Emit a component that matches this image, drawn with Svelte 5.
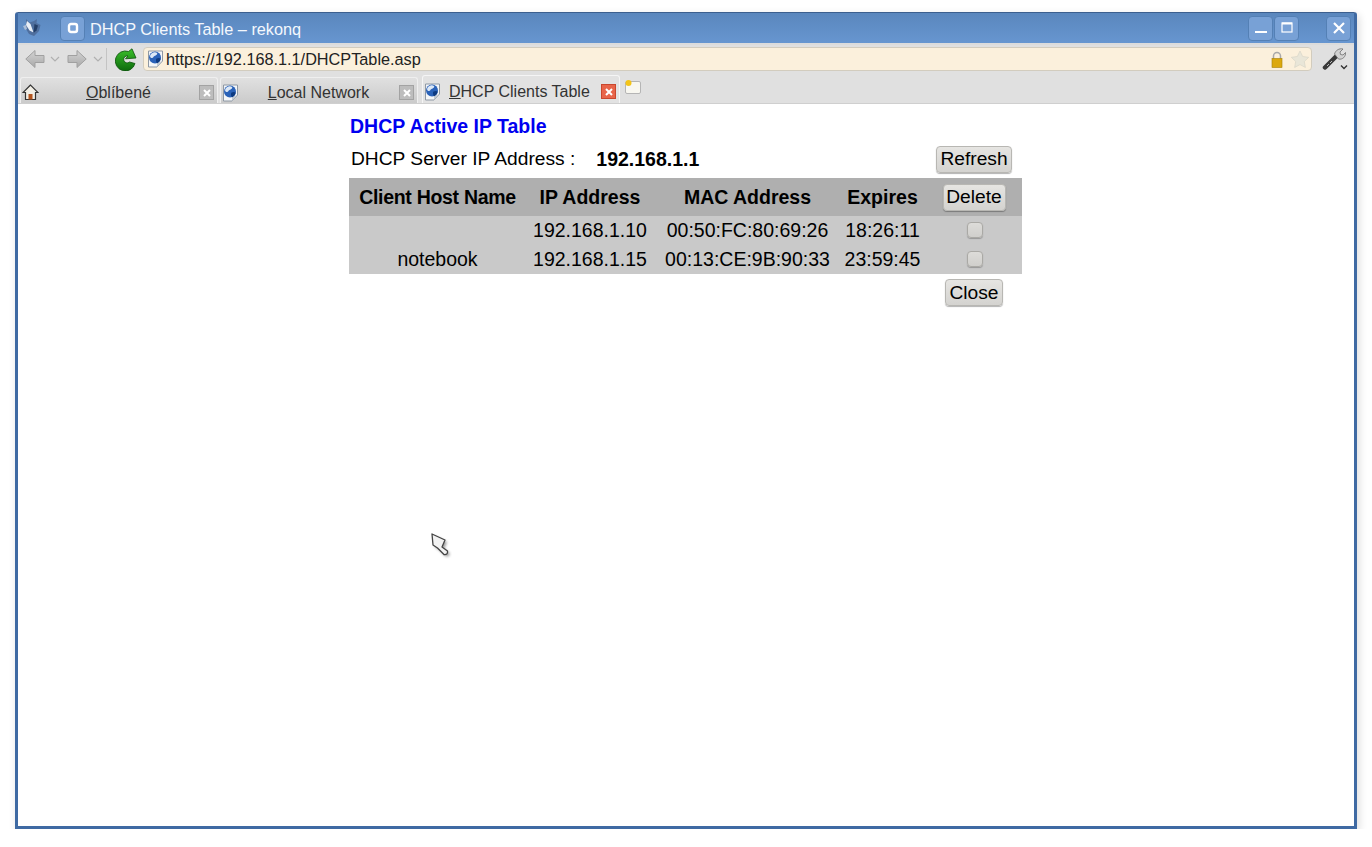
<script>
    const tabs = [
        { key: 'O', rest: 'blíbené', icon: 'home', width: 198 },
        { key: 'L', rest: 'ocal Network', icon: 'globe', width: 198 },
        { key: 'D', rest: 'HCP Clients Table', icon: 'globe', width: 198, active: true }
    ];

    const clients = [
        { host: '', ip: '192.168.1.10', mac: '00:50:FC:80:69:26', expires: '18:26:11' },
        { host: 'notebook', ip: '192.168.1.15', mac: '00:13:CE:9B:90:33', expires: '23:59:45' }
    ];
</script>

{#snippet globe()}
    <svg class="favicon" width="17" height="18" viewBox="0 0 17 18">
        <path d="M1.500 1h14v10l-5.500 6h-8.500z" fill="#f4f6f8" stroke="#8e98a4" />
        <path d="M15.500 11l-5.500 6v-4z" fill="#c3cad2" />
        <circle cx="8" cy="7.500" r="6" fill="#2a62b8" />
        <path d="M4 4c2-2 5-2 6-1s-1 2.500-2.500 3-1 2.500-3 2S3 5 4 4z" fill="#dce8f6" />
        <path d="M9.500 8.500c1.500-.8 3.500-.8 4.200 0-.5 2.500-1.700 4-3.700 4.700-1-1.200-1.500-3.500-.5-4.700z" fill="#0d3a80" />
    </svg>
{/snippet}

<div class="window">
    <header class="titlebar">
        <svg class="appicon" width="22" height="22" viewBox="0 0 22 22">
            <path d="M5 2l3.500 3.500L13 4l3-2-.5 4 4 2-1.500 6-5 5-5-2-3-5z" fill="#4f6f9e" />
            <path d="M6 4l3.500 3 3 8.500-4-2L5 8z" fill="#e8eef6" />
            <path d="M13.500 7l3.500 1.500-1.500 5-3 2.500z" fill="#243f68" />
            <path d="M2 9l3-1 1 4-2 1z" fill="#a9bdd8" />
        </svg>
        <span class="winbtn pin">
            <svg width="14" height="14" viewBox="0 0 14 14"><rect x="3" y="3" width="8" height="8" rx="2" fill="none" stroke="#fff" stroke-width="2.400" /></svg>
        </span>
        <span class="wintitle">DHCP Clients Table – rekonq</span>
        <span class="winbtn">
            <svg width="14" height="14" viewBox="0 0 14 14"><rect x="1" y="10" width="12" height="2" fill="#fff" /></svg>
        </span>
        <span class="winbtn second">
            <svg width="14" height="14" viewBox="0 0 14 14"><rect x="2" y="2" width="10" height="9" fill="none" stroke="#fff" stroke-width="1.200" /><rect x="2" y="1.500" width="10" height="2" fill="#fff" /></svg>
        </span>
        <span class="winbtn close">
            <svg width="14" height="14" viewBox="0 0 14 14"><path d="M2 2l10 10M12 2L2 12" stroke="#fff" stroke-width="2.200" /></svg>
        </span>
    </header>

    <div class="toolbar">
        <svg class="arrow" width="20" height="20" viewBox="0 0 20 20">
            <defs><linearGradient id="grey" x1="0" y1="0" x2="0" y2="1"><stop offset="0" stop-color="#d4d4d4" /><stop offset="1" stop-color="#a8a8a8" /></linearGradient></defs>
            <path d="M.8 10L10 1.500v5h9v7h-9v5z" fill="url(#grey)" stroke="#a0a0a0" />
        </svg>
        <svg class="chev" width="10" height="6" viewBox="0 0 10 6"><path d="M1 1l4 4 4-4" fill="none" stroke="#b0b0b0" stroke-width="1.200" /></svg>
        <svg class="arrow fwd" width="20" height="20" viewBox="0 0 20 20"><path d="M19.200 10L10 1.500v5H1v7h9v5z" fill="url(#grey)" stroke="#a0a0a0" /></svg>
        <svg class="chev gap" width="10" height="6" viewBox="0 0 10 6"><path d="M1 1l4 4 4-4" fill="none" stroke="#b0b0b0" stroke-width="1.200" /></svg>
        <span class="sep"></span>
        <svg class="reload" width="22" height="23" viewBox="0 0 22 23">
            <defs><linearGradient id="green" x1="0" y1="0" x2="0" y2="1"><stop offset="0" stop-color="#3cc02c" /><stop offset="1" stop-color="#0c6a0c" /></linearGradient></defs>
            <path d="M20 15.500A10 10 0 1 1 13.500 3.500L17 .8l4 9.200-10.500.8 2.500-2.800A3.500 3.500 0 1 0 14.500 14z" fill="url(#green)" stroke="#0b520b" stroke-width=".8" />
        </svg>
        <div class="urlbar">
            {@render globe()}
            <span class="url">https://192.168.1.1/DHCPTable.asp</span>
            <svg class="lock" width="14" height="17" viewBox="0 0 14 17">
                <path d="M3.500 8V5a3.500 3.500 0 0 1 7 0v3" fill="none" stroke="#a8a8a8" stroke-width="1.500" />
                <rect x="2" y="7.500" width="10" height="9" fill="#dca80c" stroke="#a67f08" stroke-width=".6" />
            </svg>
            <svg class="star" width="20" height="18" viewBox="0 0 20 18"><path d="M10 1l2.700 5.500 6 .8-4.400 4.200 1.100 6L10 14.600l-5.400 2.900 1.100-6L1.300 7.300l6-.8z" fill="#e9e6d8" stroke="#d4d1c4" stroke-width=".6" /></svg>
        </div>
        <svg class="tools" width="26" height="24" viewBox="0 0 26 24">
            <path d="M3 20.500L14 9.500" stroke="#3a3a3a" stroke-width="4.500" stroke-linecap="round" />
            <path d="M5 19l2-2M8 16l2-2" stroke="#bbb" stroke-width="1" />
            <path d="M12.500 7c1-3.500 4.500-6 8.500-5l-3 3 .5 2.500L21 8l2.500-2.500c.5 4-3 7.500-7 6.500z" fill="#d2d2d2" stroke="#6f6f6f" stroke-width=".8" />
            <path d="M19 18.500l3 3 3-3" fill="none" stroke="#333" stroke-width="1.400" />
        </svg>
    </div>

    <nav class="tabbar">
        {#each tabs as tab}
            <div class="tab" class:active={tab.active} style="width: {tab.width}px">
                {#if tab.icon === 'home'}
                    <svg class="favicon" width="17" height="17" viewBox="0 0 17 17">
                        <path d="M8.500 1L1 8.500h2.500v7h10v-7H16z" fill="#f2efe6" stroke="#333" stroke-width="1.200" />
                        <rect x="6.500" y="10" width="4" height="5.500" fill="#b3541e" />
                    </svg>
                {:else}
                    {@render globe()}
                {/if}
                <span class="tabtitle"><u>{tab.key}</u>{tab.rest}</span>
                <span class="tabclose">
                    <svg width="10" height="10" viewBox="0 0 10 10"><path d="M2 2l6 6M8 2L2 8" stroke="#fff" stroke-width="2" /></svg>
                </span>
            </div>
        {/each}
        <svg class="newtab" width="18" height="18" viewBox="0 0 18 18">
            <rect x="1.500" y="2.500" width="15" height="12" rx="1.500" fill="#f8f7f0" stroke="#b5b5b5" />
            <circle cx="4.500" cy="4" r="3" fill="#f3c417" />
        </svg>
    </nav>

    <main class="page">
        <div class="panel">
            <h1>DHCP Active IP Table</h1>
            <div class="server">
                <span class="label">DHCP Server IP Address :</span>
                <strong>192.168.1.1</strong>
                <button class="refresh">Refresh</button>
            </div>
            <table>
                <thead>
                    <tr>
                        <th class="c1">Client Host Name</th>
                        <th class="c2">IP Address</th>
                        <th class="c3">MAC Address</th>
                        <th class="c4">Expires</th>
                        <th class="c5"><button>Delete</button></th>
                    </tr>
                </thead>
                <tbody>
                    {#each clients as client}
                        <tr>
                            <td>{client.host}</td>
                            <td>{client.ip}</td>
                            <td>{client.mac}</td>
                            <td>{client.expires}</td>
                            <td class="c5"><span class="check"></span></td>
                        </tr>
                    {/each}
                </tbody>
            </table>
            <div class="actions"><button>Close</button></div>
        </div>
    </main>

    <svg class="cursor" width="22" height="28" viewBox="0 0 22 28">
        <defs><filter id="soft" x="-30%" y="-30%" width="170%" height="170%"><feGaussianBlur stdDeviation="1.500" /></filter></defs>
        <path d="M2 3L15 9l-3 7 5.500 4q.5 4-3.500 3.500L7.500 17 3 14z" fill="#000" opacity=".4" transform="translate(2 2)" filter="url(#soft)" />
        <path d="M2 3L15 9l-3 7 5.500 4q.5 4-3.500 3.500L7.500 17 3 14z" fill="#f2f2f2" stroke="#444" stroke-width="1.300" stroke-linejoin="round" />
    </svg>
</div>

<style>
    :global(body) {
        background: #fff;
        font-family: "Liberation Sans", Arial, sans-serif;
    }

    .window {
        position: relative;
        box-sizing: border-box;
        width: 1342px;
        height: 817px;
        margin: 12px 0 0 15px;
        display: flex;
        flex-direction: column;
        border: 3px solid #3f6aa3;
        border-top: 1px solid #3c5f8e;
        border-radius: 3px 3px 0 0;
        box-shadow: 2px 3px 8px rgba(0, 0, 0, 0.14);
        background: #fff;
    }

    .titlebar {
        height: 30px;
        flex: none;
        display: flex;
        align-items: center;
        background: linear-gradient(#5a87bd, #6796d0);
        color: #fff;
    }

    .appicon {
        margin-left: 3px;
    }

    .winbtn {
        box-sizing: border-box;
        width: 25px;
        height: 25px;
        display: flex;
        align-items: center;
        justify-content: center;
        flex: none;
        border: 1px solid #5480b5;
        border-radius: 4px;
        background: #78a1d6;
    }

    .pin {
        margin-left: 17px;
    }

    .second {
        margin-left: 1px;
    }

    .close {
        margin: 0 3px 0 27px;
    }

    .wintitle {
        flex: 1;
        margin-left: 5px;
        padding-top: 2px;
        font-size: 16.3px;
        color: #f4f8fd;
    }

    .toolbar {
        height: 30px;
        flex: none;
        display: flex;
        align-items: center;
        background: #e0e0e0;
        border-top: 2px solid #dcdcdc;
        box-sizing: border-box;
    }

    .arrow {
        margin-left: 7px;
    }

    .chev {
        margin-left: 5px;
    }

    .chev.gap {
        margin-left: 6px;
    }

    .sep {
        width: 1px;
        height: 22px;
        margin: 0 8px 0 3px;
        background: #c4c4c4;
    }

    .urlbar {
        box-sizing: border-box;
        width: 1169px;
        height: 24px;
        margin-left: 6px;
        display: flex;
        align-items: center;
        padding: 0 1px 0 3px;
        background: #fbf0dc;
        border: 1px solid #d2ccbe;
        border-radius: 4px;
    }

    .url {
        flex: 1;
        margin-left: 2px;
        font-size: 16.25px;
        color: #222;
    }

    .lock {
        margin-right: 6px;
    }

    .tools {
        margin-left: 10px;
    }

    .tabbar {
        height: 31px;
        flex: none;
        display: flex;
        align-items: flex-end;
        padding-left: 2px;
        background: #e0e0e0;
        border-bottom: 1px solid #cfcfcf;
        box-sizing: border-box;
    }

    .tab {
        box-sizing: border-box;
        height: 26px;
        margin-right: 2px;
        display: flex;
        align-items: center;
        padding: 4px 3px 0 1px;
        background: linear-gradient(#e0e0e0, #cbcbcb);
        border: 1px solid #efefef;
        border-bottom: none;
        border-radius: 3px 3px 0 0;
        font-size: 16px;
        color: #333;
    }

    .tab.active {
        height: 28px;
        margin-left: 2px;
        background: #e2e2e2;
        border-color: #f5f5f5;
    }

    .tabtitle {
        flex: 1;
        padding-right: 1px;
        text-align: center;
    }

    .active .tabtitle {
        margin-left: 8px;
        text-align: left;
    }

    .tabclose {
        box-sizing: border-box;
        width: 15px;
        height: 15px;
        display: flex;
        align-items: center;
        justify-content: center;
        background: #bdbdbd;
        border: 1px solid #a3a3a3;
    }

    .active .tabclose {
        background: #e8654a;
        border-color: #c9472e;
    }

    .newtab {
        margin: 0 0 6px 2px;
    }

    .page {
        flex: 1;
        display: flex;
        justify-content: center;
        background: #fff;
    }

    .panel {
        width: 673px;
        margin-left: -1px;
        color: #000;
    }

    h1 {
        margin: 12px 0 0 1px;
        font-size: 19.5px;
        line-height: 20px;
        font-weight: bold;
        color: #0000f0;
    }

    .server {
        height: 28px;
        margin-top: 9px;
        display: flex;
        align-items: center;
        font-size: 19.2px;
    }

    .label {
        margin-left: 2px;
    }

    strong {
        margin-left: 21px;
        font-size: 19.5px;
    }

    button {
        box-sizing: border-box;
        padding: 0;
        height: 27px;
        font: 19.2px "Liberation Sans", Arial, sans-serif;
        color: #000;
        background: linear-gradient(#e6e5e2, #d4d3d0);
        border: 1px solid #b8b7b3;
        border-radius: 4px;
        box-shadow: 0 1px 1px rgba(0, 0, 0, 0.3);
    }

    .refresh {
        width: 76px;
        margin-left: auto;
        margin-right: 10px;
    }

    table {
        width: 673px;
        margin-top: 5px;
        border-collapse: collapse;
        table-layout: fixed;
        font-size: 19.5px;
    }

    th {
        height: 38px;
        box-sizing: border-box;
        padding: 0;
        background: #afafaf;
    }

    td {
        height: 29px;
        box-sizing: border-box;
        padding: 0;
        text-align: center;
        background: #c9c9c9;
    }

    .c1 { width: 177px; letter-spacing: -0.3px; }
    .c2 { width: 128px; }
    .c3 { width: 187px; }
    .c4 { width: 83px; }

    th.c5 {
        padding-left: 2px;
    }

    td.c5 {
        padding-left: 3px;
    }

    th button {
        width: 63px;
    }

    .check {
        display: inline-block;
        box-sizing: border-box;
        width: 16px;
        height: 16px;
        vertical-align: middle;
        margin-bottom: 4px;
        background: linear-gradient(#dddcd9, #d0cfcc);
        border: 1px solid #aaa9a5;
        border-radius: 4px;
        box-shadow: 0 1px 1px rgba(0, 0, 0, 0.25);
    }

    .actions {
        width: 673px;
        margin-top: 5px;
        display: flex;
        justify-content: flex-end;
    }

    .actions button {
        width: 58px;
        margin-right: 19px;
    }

    .cursor {
        position: absolute;
        left: 412px;
        top: 518px;
    }
</style>
